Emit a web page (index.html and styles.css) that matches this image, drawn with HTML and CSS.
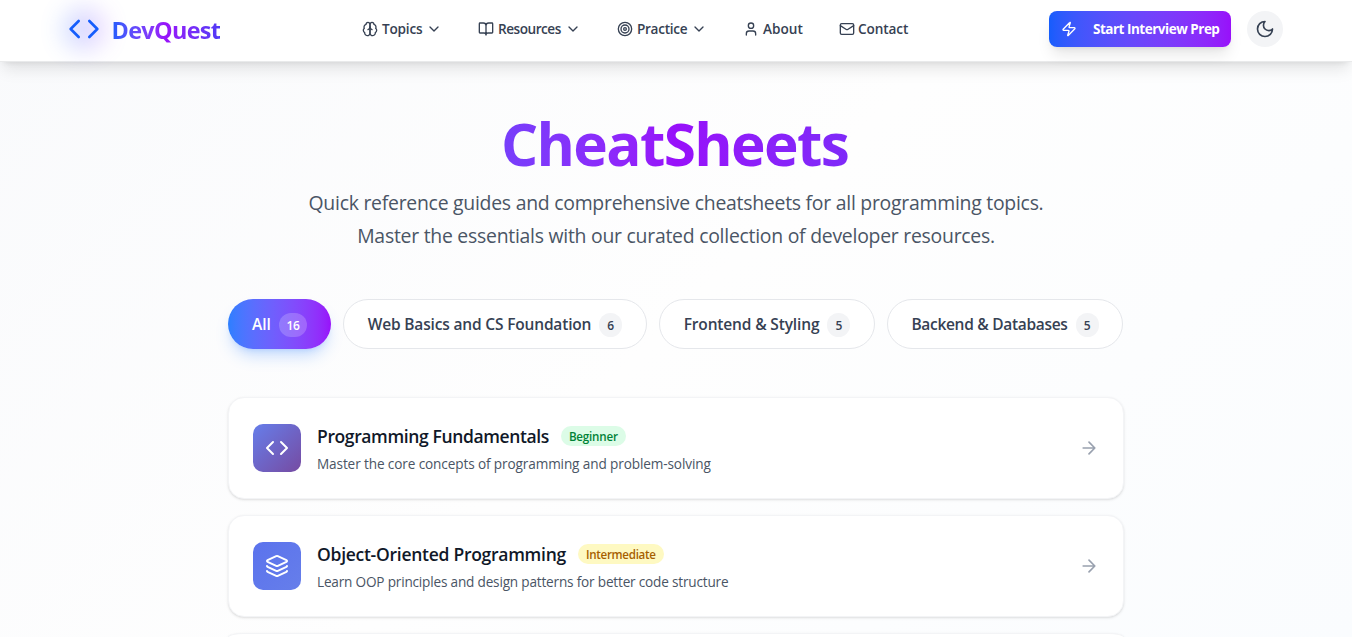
FILE: index.html
```html
<!DOCTYPE html>
<html lang="en">
<head>
<meta charset="utf-8">
<title>DevQuest CheatSheets</title>
<link rel="stylesheet" href="styles.css">
</head>
<body>
<header class="header">
  <a class="logo">
    <span class="logo-mark"><svg class="icon logo-icon" viewBox="0 0 24 24"><path d="m16 18 6-6-6-6M8 6l-6 6 6 6"/></svg></span>
    <span class="logo-text">DevQuest</span>
  </a>
  <nav class="nav">
    <a class="nav-item topics"><svg class="icon" viewBox="0 0 24 24"><path d="M12 5a3 3 0 1 0-5.997.125 4 4 0 0 0-2.526 5.77 4 4 0 0 0 .556 6.588A4 4 0 1 0 12 18Z"/><path d="M12 5a3 3 0 1 1 5.997.125 4 4 0 0 1 2.526 5.77 4 4 0 0 1-.556 6.588A4 4 0 1 1 12 18Z"/><path d="M15 13a4.500 4.500 0 0 1-3-4 4.500 4.500 0 0 1-3 4"/></svg><span>Topics</span><svg class="icon" viewBox="0 0 24 24"><path d="m6 9 6 6 6-6"/></svg></a>
    <a class="nav-item resources"><svg class="icon" viewBox="0 0 24 24"><path d="M12 7v14M3 18a1 1 0 0 1-1-1V4a1 1 0 0 1 1-1h5a4 4 0 0 1 4 4 4 4 0 0 1 4-4h5a1 1 0 0 1 1 1v13a1 1 0 0 1-1 1h-6a3 3 0 0 0-3 3 3 3 0 0 0-3-3z"/></svg><span>Resources</span><svg class="icon" viewBox="0 0 24 24"><path d="m6 9 6 6 6-6"/></svg></a>
    <a class="nav-item practice"><svg class="icon" viewBox="0 0 24 24"><circle cx="12" cy="12" r="10"/><circle cx="12" cy="12" r="6"/><circle cx="12" cy="12" r="2"/></svg><span>Practice</span><svg class="icon" viewBox="0 0 24 24"><path d="m6 9 6 6 6-6"/></svg></a>
    <a class="nav-item about"><svg class="icon" viewBox="0 0 24 24"><path d="M19 21v-2a4 4 0 0 0-4-4H9a4 4 0 0 0-4 4v2"/><circle cx="12" cy="7" r="4"/></svg><span>About</span></a>
    <a class="nav-item contact"><svg class="icon" viewBox="0 0 24 24"><rect x="2" y="4" width="20" height="16" rx="2"/><path d="m22 7-8.970 5.700a1.940 1.940 0 0 1-2.060 0L2 7"/></svg><span>Contact</span></a>
  </nav>
  <button class="cta"><svg class="icon" viewBox="0 0 24 24"><path d="M4 14a1 1 0 0 1-.78-1.630l9.900-10.200a.5.5 0 0 1 .860.460l-1.920 6.020A1 1 0 0 0 13 10h7a1 1 0 0 1 .780 1.630l-9.900 10.200a.5.5 0 0 1-.860-.460l1.920-6.020A1 1 0 0 0 11 14z"/></svg><span>Start Interview Prep</span></button>
  <button class="theme" aria-label="Toggle theme"><svg class="icon" viewBox="0 0 24 24"><path d="M12 3a6 6 0 0 0 9 9 9 9 0 1 1-9-9Z"/></svg></button>
</header>
<main class="main">
  <h1 class="title">CheatSheets</h1>
  <p class="lead">Quick reference guides and comprehensive cheatsheets for all programming topics.<br>Master the essentials with our curated collection of developer resources.</p>
  <div class="filters">
    <button class="pill all"><span>All</span><span class="count">16</span></button>
    <button class="pill web"><span>Web Basics and CS Foundation</span><span class="count">6</span></button>
    <button class="pill frontend"><span>Frontend &amp; Styling</span><span class="count">5</span></button>
    <button class="pill backend"><span>Backend &amp; Databases</span><span class="count">5</span></button>
  </div>
  <div class="cards">
    <article class="card fundamentals">
      <div class="tile"><svg class="icon" viewBox="0 0 24 24"><path d="m16 18 6-6-6-6M8 6l-6 6 6 6"/></svg></div>
      <div class="card-body">
        <div class="card-head"><h2 class="card-title">Programming Fundamentals</h2><span class="badge beginner">Beginner</span></div>
        <p class="desc">Master the core concepts of programming and problem-solving</p>
      </div>
      <svg class="icon arrow" viewBox="0 0 24 24"><path d="M5 12h14M12 5l7 7-7 7"/></svg>
    </article>
    <article class="card oop">
      <div class="tile"><svg class="icon" viewBox="0 0 24 24"><path d="M12.830 2.180a2 2 0 0 0-1.660 0L2.600 6.080a1 1 0 0 0 0 1.830l8.580 3.910a2 2 0 0 0 1.660 0l8.580-3.900a1 1 0 0 0 0-1.830z"/><path d="M2 12a1 1 0 0 0 .580.910l8.600 3.910a2 2 0 0 0 1.650 0l8.580-3.900A1 1 0 0 0 22 12"/><path d="M2 17a1 1 0 0 0 .580.910l8.600 3.910a2 2 0 0 0 1.650 0l8.580-3.900A1 1 0 0 0 22 17"/></svg></div>
      <div class="card-body">
        <div class="card-head"><h2 class="card-title">Object-Oriented Programming</h2><span class="badge intermediate">Intermediate</span></div>
        <p class="desc">Learn OOP principles and design patterns for better code structure</p>
      </div>
      <svg class="icon arrow" viewBox="0 0 24 24"><path d="M5 12h14M12 5l7 7-7 7"/></svg>
    </article>
    <article class="card peek"></article>
  </div>
</main>
</body>
</html>
```
FILE: styles.css
```css
* { box-sizing: border-box; }
body { margin: 0; height: 637px; overflow: hidden; white-space: nowrap; font-family: "Open Sans", "Noto Sans", sans-serif; background: linear-gradient(135deg, #f9fafc 0%, #fefefe 50%, #fafcfe 100%); color: #364153; }
button { border: 0; margin: 0; padding: 0; font: inherit; letter-spacing: inherit; color: inherit; }
.icon { display: block; flex: none; width: 16px; height: 16px; fill: none; stroke: currentColor; stroke-width: 2; stroke-linecap: round; stroke-linejoin: round; }

.header { position: relative; z-index: 1; height: 62px; background: #fff; border-bottom: 1px solid #e9eaeb; box-shadow: 0 10px 15px -3px rgba(0,0,0,.1), 0 4px 6px -4px rgba(0,0,0,.1); display: flex; padding: 0 69px 4px 68px; align-items: center; }
.logo { display: flex; align-items: center; width: 294px; gap: 12px; }
.logo-mark { position: relative; }
.logo-mark::before { content: ""; position: absolute; inset: -5px; border-radius: 50%; background: linear-gradient(to right, #2b7fff, #ad46ff); opacity: .25; filter: blur(12px); }
.logo-icon { position: relative; width: 32px; height: 32px; color: #155dfc; }
.logo-text { font-size: 23.4px; font-weight: 700; line-height: 32px; letter-spacing: -.65px; margin: 3px 0 0 -.5px; background: linear-gradient(to right in oklab, #155dfc, #9810fa, #4f39f6); -webkit-background-clip: text; background-clip: text; color: transparent; }
.nav { display: flex; width: 687px; font-size: 13.6px; font-weight: 600; line-height: 20px; }
.nav-item { display: flex; align-items: center; gap: 4px; }
.topics { width: 116px; letter-spacing: -.2px; }
.resources { width: 139px; letter-spacing: -.48px; }
.practice { width: 126px; letter-spacing: -.3px; }
.about { width: 96px; }
.contact { gap: 3px; letter-spacing: -.1px; }
.cta { display: flex; align-items: center; width: 182px; height: 36px; border-radius: 8px; padding-left: 12px; gap: 16px; color: #fff; font-size: 13.5px; letter-spacing: -.49px; font-weight: 700; background: linear-gradient(to right in oklab, #155dfc, #9810fa); box-shadow: 0 10px 15px -3px rgba(0,0,0,.1), 0 4px 6px -4px rgba(0,0,0,.1); }
.theme { display: flex; align-items: center; justify-content: center; width: 36px; height: 36px; margin-left: 16px; border-radius: 50%; background: #f3f4f6; }
.theme .icon { width: 20px; height: 20px; }

.main { width: 896px; margin: 0 auto; padding-top: 48px; }
.title { margin: 0; height: 77px; padding-right: 3px; font-size: 58.5px; letter-spacing: -1.65px; line-height: 66px; font-weight: 700; text-align: center; background: linear-gradient(to right in oklab, #155dfc, #9810fa, #4f39f6); -webkit-background-clip: text; background-clip: text; color: transparent; }
.lead { margin: 0; font-size: 19.4px; letter-spacing: -.25px; line-height: 32.5px; text-align: center; color: #4a5565; }
.filters { display: flex; gap: 12px; margin-top: 47px; }
.pill { display: flex; align-items: center; justify-content: center; gap: 8px; height: 50px; border-radius: 25px; background: #fff; border: 1px solid #e5e7eb; font-size: 15.5px; font-weight: 600; }
.all { width: 103px; border: 0; color: #fff; background: linear-gradient(to right in oklab, #2b7fff, #9810fa); box-shadow: 0 10px 15px -3px rgba(43,127,255,.25), 0 4px 6px -4px rgba(43,127,255,.25); }
.web { width: 304px; letter-spacing: -.17px; }
.frontend { width: 216px; letter-spacing: -.15px; }
.backend { width: 236px; letter-spacing: -.3px; }
.count { width: 23px; height: 24px; margin-top: 1px; border-radius: 12px; font-size: 12px; line-height: 25px; text-align: center; letter-spacing: 0; background: #f3f4f6; }
.all .count { width: 28px; letter-spacing: -.4px; background: rgba(255,255,255,.2); }

.cards { display: flex; flex-direction: column; gap: 16px; margin-top: 48px; }
.card { height: 102px; flex: none; display: flex; align-items: center; gap: 16px; padding: 0 24px; border-radius: 16px; background: #fff; border: 1px solid #f3f4f6; box-shadow: 0 1px 3px rgba(0,0,0,.1), 0 1px 2px -1px rgba(0,0,0,.1); }
.peek { height: 4px; border-bottom: 0; border-radius: 16px 16px 0 0 / 4px 4px 0 0; }
.tile { display: flex; align-items: center; justify-content: center; width: 48px; height: 48px; border-radius: 10px; color: #fff; background: linear-gradient(135deg, #667eea, #764ba2); }
.tile .icon { width: 24px; height: 24px; }
.oop .tile { background: linear-gradient(135deg, #5b73ed, #667eea); }
.card-body { flex: 1; }
.card-head { display: flex; align-items: center; gap: 12px; height: 28px; }
.card-title { margin: 0; color: #101828; font-size: 17.5px; font-weight: 600; line-height: 29px; letter-spacing: -.38px; }
.oop .card-title { letter-spacing: -.27px; }
.badge { height: 20px; padding: 0 8px; border-radius: 10px; font-size: 11.6px; font-weight: 600; line-height: 21px; letter-spacing: -.2px; }
.beginner { color: #008236; background: #dcfce7; }
.intermediate { color: #a65f00; background: #fef9c2; letter-spacing: -.3px; }
.desc { margin: 4px 0 0; font-size: 13.6px; line-height: 20px; letter-spacing: -.12px; color: #4a5565; }
.oop .desc { letter-spacing: -.19px; }
.arrow { width: 20px; height: 20px; color: #99a1af; }
```
